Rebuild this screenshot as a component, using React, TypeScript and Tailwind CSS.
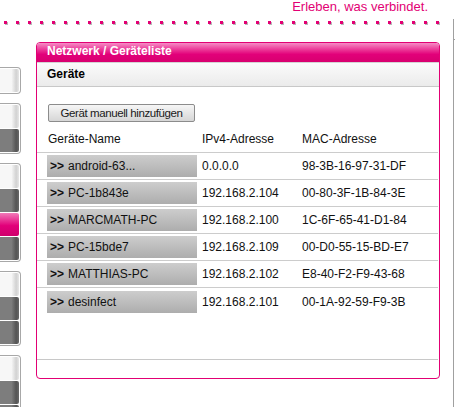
import React from 'react';

const devices = [
  { name: 'android-63...', ip: '0.0.0.0', mac: '98-3B-16-97-31-DF' },
  { name: 'PC-1b843e', ip: '192.168.2.104', mac: '00-80-3F-1B-84-3E' },
  { name: 'MARCMATH-PC', ip: '192.168.2.100', mac: '1C-6F-65-41-D1-84' },
  { name: 'PC-15bde7', ip: '192.168.2.109', mac: '00-D0-55-15-BD-E7' },
  { name: 'MATTHIAS-PC', ip: '192.168.2.102', mac: 'E8-40-F2-F9-43-68' },
  { name: 'desinfect', ip: '192.168.2.101', mac: '00-1A-92-59-F9-3B' },
];

type Seg = 'light' | 'dark' | 'pink';

// left navigation, scrolled mostly out of view
const navGroups: Seg[][] = [
  ['light'],
  ['light', 'dark'],
  ['light', 'dark', 'pink', 'dark'],
  ['light', 'dark', 'dark'],
  ['light', 'dark', 'dark'],
];

const segClass: Record<Seg, string> = {
  light: 'bg-[linear-gradient(to_right,#f7f7f7_60%,#d2d2d2_85%,#e6e6e6)]',
  dark: 'bg-[linear-gradient(to_right,#7d7d7d_60%,#555555_85%,#686868)]',
  pink: 'bg-[linear-gradient(to_bottom,#f27ab8,#e2007a_55%,#cf006c)]',
};

const NavStub = () => (
  <div className="mt-[25px] flex w-[21px] shrink-0 flex-col gap-[9px]">
    {navGroups.map((group, i) => (
      <div
        key={i}
        className="flex flex-col gap-[1px] rounded-r-[4px] border-y border-r border-[#a8a8a8] bg-white py-[1px] pr-[1px]"
      >
        {group.map((seg, j) => (
          <div key={j} className={`h-[23px] rounded-r-[2px] ${segClass[seg]}`} />
        ))}
      </div>
    ))}
  </div>
);

const Dots = () => (
  <div className="mt-[8px] flex h-[3px] gap-[9px] pl-[4px]">
    {Array.from({ length: 37 }).map((_, i) => (
      <span key={i} className="h-[3px] w-[3px] bg-[#e20074] shadow-[1px_1px_0_#b8b8b8]" />
    ))}
  </div>
);

const DeviceList = () => (
  <div className="ml-[15px] w-[404px] overflow-hidden rounded-[4px] border border-[#e20074] bg-white">
    <div className="h-[19px] bg-[linear-gradient(to_bottom,#f58cc5,#ea2b90_40%,#e2007a_60%,#d8006f)] pl-[10px] pt-[1px] text-[12px] font-bold leading-[14px] text-white">
      Netzwerk / Geräteliste
    </div>
    <div className="border-y border-t-[#d4d4d4] border-b-[#c8c8c8] bg-linear-to-b from-[#fbfbfb] to-[#ebebeb] pb-[5px] pl-[10px] pt-[4px] text-[12px] font-bold leading-[14px] text-black">
      Geräte
    </div>

    <div className="flex h-[272px] flex-col pt-[17px]">
      <div className="flex pl-[11px]">
        <button className="h-[18px] w-[147px] rounded-[2px] border border-[#8c8c8c] bg-linear-to-b from-[#f6f6f6] to-[#d6d6d6] text-[11.5px] leading-[14px] tracking-[-0.4px] text-[#1a1a1a]">
          Gerät manuell hinzufügen
        </button>
      </div>

      <div className="mr-[1px] grid grid-cols-[155px_100px_1fr] border-b border-[#cccccc] pb-[6px] pl-[10px] pt-[10px] text-[12px] leading-[14px] text-[#111]">
        <span className="pl-[1px]">Geräte-Name</span>
        <span>IPv4-Adresse</span>
        <span>MAC-Adresse</span>
      </div>

      {devices.map((d, i) => (
        <div
          key={d.mac}
          className={`mr-[1px] grid h-[27px] grid-cols-[155px_100px_1fr] items-center pl-[10px] text-[12px] leading-[14px] text-[#111] ${
            i < devices.length - 1 ? 'border-b border-[#cccccc]' : ''
          }`}
        >
          <div className="flex h-[22px] w-[150px] items-center bg-linear-to-b from-[#cdcdcd] to-[#adadad] pl-[3px]">
            <span className="font-bold">&gt;&gt;</span>
            <span className="ml-[4px]">{d.name}</span>
          </div>
          <span>{d.ip}</span>
          <span>{d.mac}</span>
        </div>
      ))}
    </div>

    <div className="mr-[1px] h-[19px] border-t border-[#c8c8c8]" />
  </div>
);

export default function App() {
  return (
    <div className="flex h-[407px] w-[455px] overflow-hidden bg-white font-['Liberation_Sans',Arial,sans-serif]">
      <div className="w-[453px] shrink-0">
        <div className="h-[13px] pr-[25px] text-right text-[13px] leading-[13px] text-[#e20074]">
          Erleben, was verbindet.
        </div>
        <Dots />
        <div className="mt-[18px] flex items-start">
          <NavStub />
          <DeviceList />
        </div>
      </div>
      <div className="mt-[19px] w-[2px] border-l border-[#a0a0a0]">
        <div className="mt-[20px] h-[1px] bg-[#a0a0a0]" />
      </div>
    </div>
  );
}
